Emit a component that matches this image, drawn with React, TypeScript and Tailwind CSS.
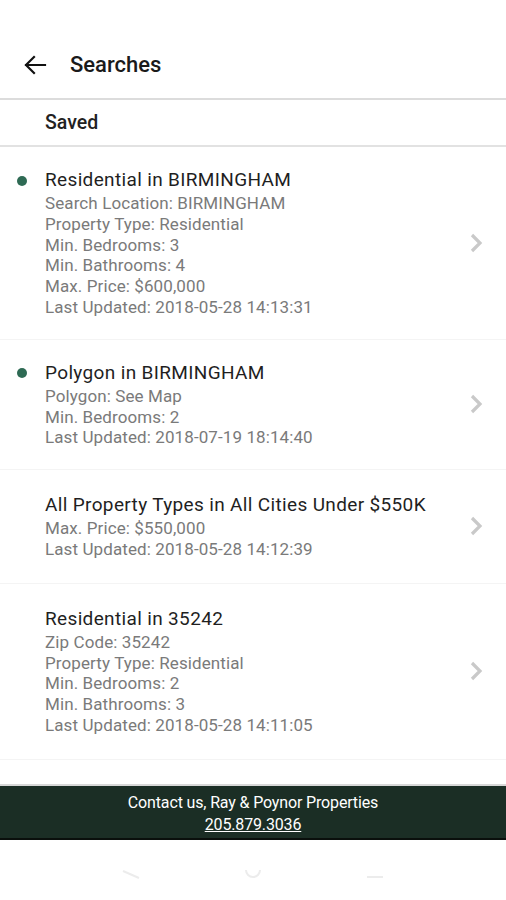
import { ReactNode } from "react";

type Search = {
  title: string;
  active: boolean;
  lines: string[];
  updated: string;
  roomy?: boolean;
};

const searches: Search[] = [
  {
    title: "Residential in BIRMINGHAM",
    active: true,
    lines: [
      "Search Location: BIRMINGHAM",
      "Property Type: Residential",
      "Min. Bedrooms: 3",
      "Min. Bathrooms: 4",
      "Max. Price: $600,000",
    ],
    updated: "2018-05-28 14:13:31",
  },
  {
    title: "Polygon in BIRMINGHAM",
    active: true,
    lines: ["Polygon: See Map", "Min. Bedrooms: 2"],
    updated: "2018-07-19 18:14:40",
  },
  {
    title: "All Property Types in All Cities Under $550K",
    active: false,
    lines: ["Max. Price: $550,000"],
    updated: "2018-05-28 14:12:39",
    roomy: true,
  },
  {
    title: "Residential in 35242",
    active: false,
    lines: [
      "Zip Code: 35242",
      "Property Type: Residential",
      "Min. Bedrooms: 2",
      "Min. Bathrooms: 3",
    ],
    updated: "2018-05-28 14:11:05",
    roomy: true,
  },
];

const BackArrow = () => (
  <svg width="24" height="24" viewBox="0 0 24 24" fill="none">
    <path
      d="M22 12H3M11 4l-8 8 8 8"
      stroke="#111"
      strokeWidth="2.2"
      strokeLinecap="square"
    />
  </svg>
);

const Chevron = () => (
  <svg width="16" height="22" viewBox="0 0 16 22" fill="none">
    <path d="M4 3l8 8-8 8" stroke="#c9c9c9" strokeWidth="3.2" />
  </svg>
);

function Row({ s }: { s: Search }) {
  return (
    <div className="flex items-center border-b border-[#f4f4f4] pr-[22px]">
      <div className={s.roomy ? "flex-1 py-[23px]" : "flex-1 py-[21px]"}>
        <div className="flex items-center h-[25px]">
          <div className="w-[45px] flex justify-center pr-[2px]">
            {s.active && (
              <span className="block w-[10px] h-[10px] rounded-full bg-[#2e6a54]" />
            )}
          </div>
          <span className="text-[19px] text-[#1f1f1f] tracking-[0.35px]">
            {s.title}
          </span>
        </div>
        <div className="pl-[45px] text-[17px] leading-[20.8px] text-[#7a7a7a] tracking-[0.1px]">
          {s.lines.map((l) => (
            <div key={l}>{l}</div>
          ))}
          <div>Last Updated: {s.updated}</div>
        </div>
      </div>
      <Chevron />
    </div>
  );
}

function NavKey({ children }: { children: ReactNode }) {
  return <div className="w-[60px] flex justify-center">{children}</div>;
}

export default function App() {
  return (
    <div
      className="w-[506px] h-[900px] bg-white flex flex-col overflow-hidden"
      style={{ fontFamily: "Roboto, 'Noto Sans', sans-serif" }}
    >
      {/* Header */}
      <div className="h-[98px] flex items-end pb-[21px] pl-[23px] shrink-0">
        <BackArrow />
        <span className="ml-[23px] text-[22px] font-medium text-[#1a1a1a] leading-[24px]">
          Searches
        </span>
      </div>
      <div className="h-[2px] bg-[#dcdcdc] shrink-0" />
      <div className="h-[45px] flex items-center pl-[45px] text-[19.5px] font-medium text-[#222] shrink-0">
        Saved
      </div>
      <div className="h-[2px] bg-[#e2e2e2] shrink-0" />

      {/* List */}
      <div className="flex-1">
        {searches.map((s) => (
          <Row key={s.title} s={s} />
        ))}
      </div>

      {/* Footer */}
      <div className="h-[56px] shrink-0 bg-[#1b2e25] border-t-2 border-[#d8d8d8] border-b-2 border-b-[#0a0f0c] flex flex-col items-center justify-center pt-[4px] text-white text-[16px] leading-[22px]">
        <div className="tracking-[-0.15px]">Contact us, Ray &amp; Poynor Properties</div>
        <div className="underline tracking-[-0.15px]">205.879.3036</div>
      </div>

      {/* System nav */}
      <div className="h-[60px] shrink-0 flex items-center justify-around px-[70px] pt-[8px]">
        <NavKey>
          <svg width="20" height="10" viewBox="0 0 20 10">
            <path d="M2 2l16 7" stroke="#ececec" strokeWidth="2" />
          </svg>
        </NavKey>
        <NavKey>
          <svg width="20" height="10" viewBox="0 0 20 10">
            <path d="M3 1a7 7 0 0014 0" stroke="#ececec" strokeWidth="2" fill="none" />
          </svg>
        </NavKey>
        <NavKey>
          <svg width="20" height="10" viewBox="0 0 20 10">
            <path d="M2 8h16" stroke="#ececec" strokeWidth="2" />
          </svg>
        </NavKey>
      </div>
    </div>
  );
}
